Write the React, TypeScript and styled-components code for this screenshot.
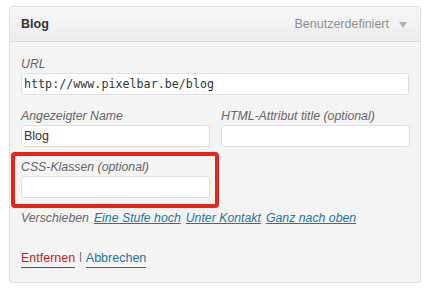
import React from "react";
import styled, { createGlobalStyle } from "styled-components";

const GlobalStyle = createGlobalStyle`
  html, body {
    margin: 0;
    padding: 0;
    background: #ffffff;
    font-family: "Liberation Sans", Arial, sans-serif;
  }
`;

const Page = styled.div`
  padding: 6px 13px 0 9px;
`;

const Panel = styled.section`
  width: 412px;
  border: 1px solid #dfdfdf;
  border-radius: 3px;
  background: #f4f4f4;
  box-sizing: border-box;
`;

const Header = styled.header`
  display: flex;
  align-items: center;
  justify-content: space-between;
  height: 34px;
  padding: 0 13px 0 11px;
  background: linear-gradient(to bottom, #f8f8f8, #ececec);
  border-bottom: 1px solid #dcdcdc;
  border-radius: 3px 3px 0 0;
`;

const Title = styled.h3`
  margin: 0;
  font-size: 12.5px;
  font-weight: 700;
  color: #333333;
`;

const ItemType = styled.span`
  display: flex;
  align-items: center;
  gap: 10px;
  font-size: 12.5px;
  color: #8f8f8f;
`;

const Arrow = styled.span`
  width: 0;
  height: 0;
  border-left: 4px solid transparent;
  border-right: 4px solid transparent;
  border-top: 6px solid #b3b3b3;
  margin-top: 2px;
`;

const Body = styled.div`
  padding: 15px 11px 14px 11px;
`;

const Field = styled.label`
  display: flex;
  flex-direction: column;
  gap: 2px;
`;

const Label = styled.span`
  font-size: 12.3px;
  font-style: italic;
  color: #666666;
  line-height: 14px;
`;

const Input = styled.input<{ $mono?: boolean }>`
  height: 22px;
  box-sizing: border-box;
  border: 1px solid #dfdfdf;
  border-radius: 3px;
  background: #ffffff;
  padding: 0 2px;
  font-family: ${(p) =>
    p.$mono ? `"DejaVu Sans Mono", monospace` : `"Liberation Sans", Arial, sans-serif`};
  font-size: ${(p) => (p.$mono ? "11.7px" : "12.5px")};
  color: #333333;
  outline: none;
`;

const Row = styled.div`
  display: grid;
  grid-template-columns: 189px 189px;
  column-gap: 11px;
  margin-top: 14px;
`;

const Highlight = styled.div`
  width: 189px;
  margin: 5px 0 0 -10px;
  padding: 4px 5px 6px 6px;
  border: 4px solid #e8231b;
  border-radius: 4px;
`;

const MoveRow = styled.div`
  display: flex;
  gap: 5px;
  margin-top: 3px;
  font-size: 12.3px;
  font-style: italic;
  line-height: 14px;
`;

const MoveLabel = styled.span`
  color: #666666;
`;

const MoveLink = styled.a`
  color: #21759b;
  text-decoration: underline;
  cursor: pointer;
`;

const Actions = styled.div`
  display: flex;
  align-items: flex-start;
  gap: 4px;
  margin-top: 26px;
  font-size: 12.5px;
  line-height: 14px;
`;

const ActionLink = styled.a<{ $danger?: boolean }>`
  color: ${(p) => (p.$danger ? "#c91d1d" : "#21759b")};
  text-decoration: none;
  border-bottom: 1px solid ${(p) => (p.$danger ? "#c91d1d" : "#21759b")};
  padding-bottom: 2px;
  cursor: pointer;
`;

const Sep = styled.span`
  color: #555555;
  font-size: 10px;
  line-height: 12px;
`;

export default function App() {
  return (
    <>
      <GlobalStyle />
      <Page>
        <Panel>
          <Header>
            <Title>Blog</Title>
            <ItemType>
              Benutzerdefiniert
              <Arrow />
            </ItemType>
          </Header>
          <Body>
            <Field>
              <Label>URL</Label>
              <Input $mono defaultValue="http://www.pixelbar.be/blog" />
            </Field>
            <Row>
              <Field>
                <Label>Angezeigter Name</Label>
                <Input defaultValue="Blog" />
              </Field>
              <Field>
                <Label>HTML-Attribut title (optional)</Label>
                <Input />
              </Field>
            </Row>
            <Highlight>
              <Field>
                <Label>CSS-Klassen (optional)</Label>
                <Input />
              </Field>
            </Highlight>
            <MoveRow>
              <MoveLabel>Verschieben</MoveLabel>
              <MoveLink>Eine Stufe hoch</MoveLink>
              <MoveLink>Unter Kontakt</MoveLink>
              <MoveLink>Ganz nach oben</MoveLink>
            </MoveRow>
            <Actions>
              <ActionLink $danger>Entfernen</ActionLink>
              <Sep>|</Sep>
              <ActionLink>Abbrechen</ActionLink>
            </Actions>
          </Body>
        </Panel>
      </Page>
    </>
  );
}
